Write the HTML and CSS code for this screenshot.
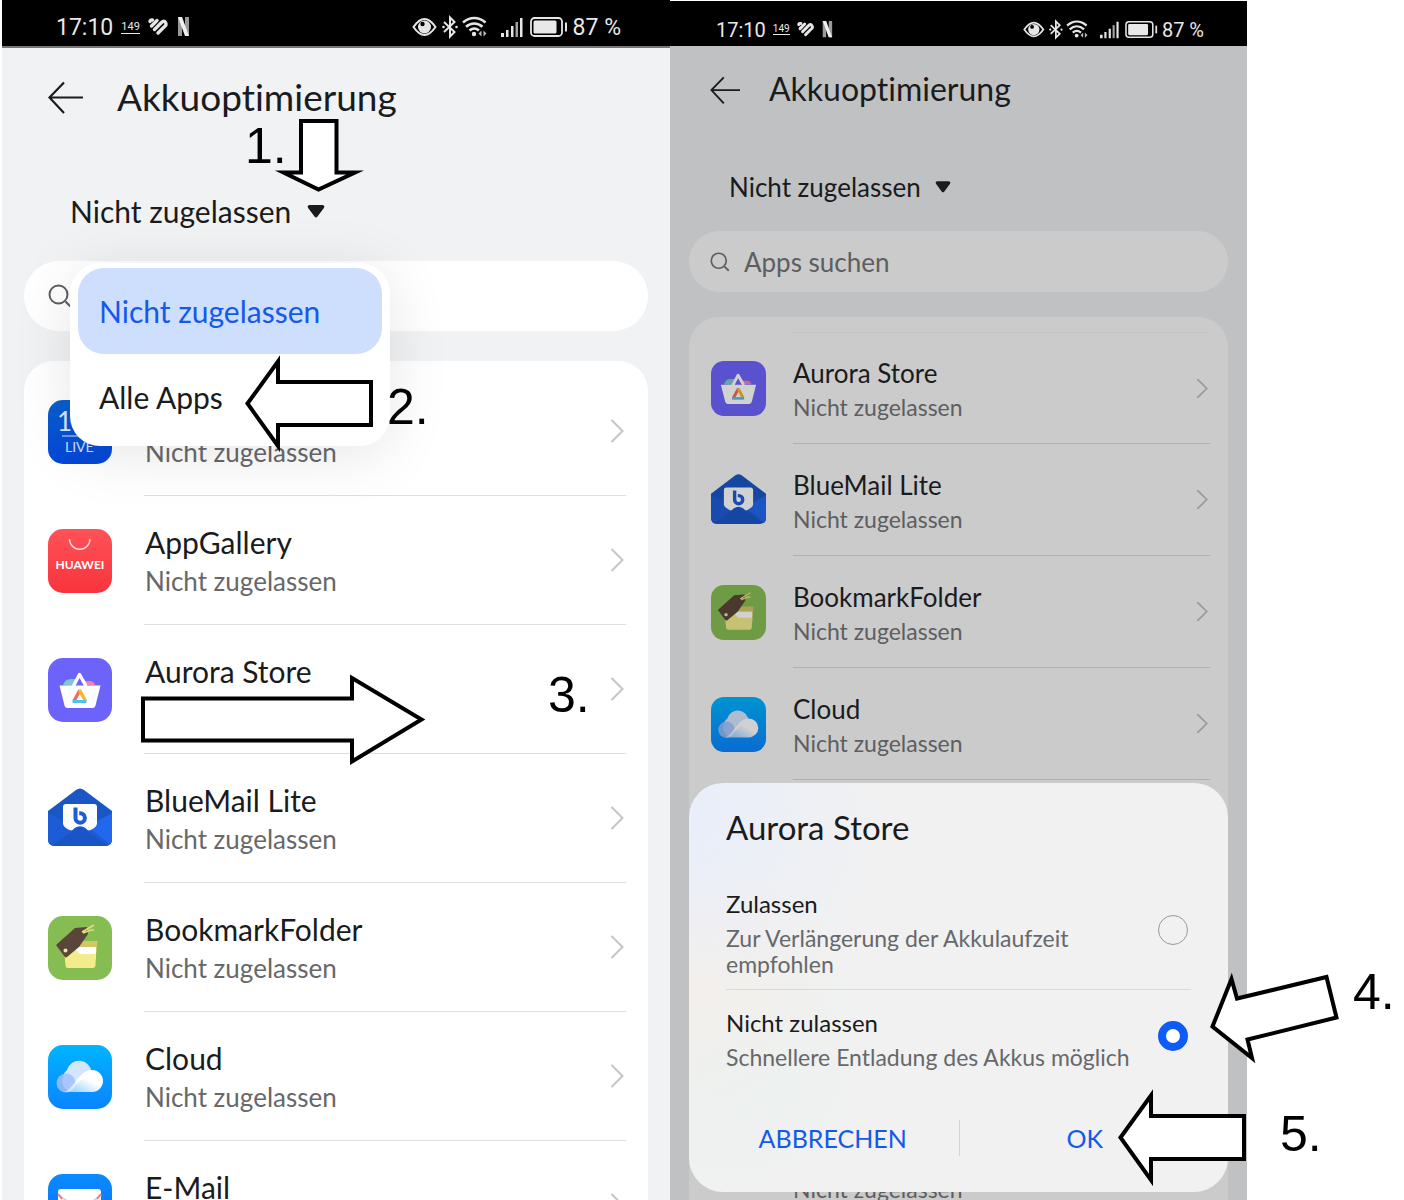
FILE: index.html
```html
<!DOCTYPE html>
<html lang="de">
<head>
<meta charset="utf-8">
<meta name="viewport" content="width=device-width, initial-scale=1">
<title>Akkuoptimierung</title>
<link rel="stylesheet" href="styles.css">
</head>
<body>
<svg class="defs" aria-hidden="true">
  <defs>
    <linearGradient id="g-live" x1="0" y1="0" x2="0" y2="1"><stop offset="0" stop-color="#0a5fd0"/><stop offset="1" stop-color="#0546d8"/></linearGradient>
    <linearGradient id="g-gallery" x1="0" y1="0" x2="0" y2="1"><stop offset="0" stop-color="#ff5257"/><stop offset="1" stop-color="#f8333c"/></linearGradient>
    <linearGradient id="g-cloud" x1="0" y1="0" x2="0" y2="1"><stop offset="0" stop-color="#00b4ff"/><stop offset="1" stop-color="#0a84ff"/></linearGradient>
    <linearGradient id="g-puff" x1="0" y1="1" x2="1" y2="0"><stop offset="0" stop-color="#fff" stop-opacity=".5"/><stop offset=".6" stop-color="#fff"/></linearGradient>
    <linearGradient id="g-mail" x1="0" y1="0" x2="0" y2="1"><stop offset="0" stop-color="#0a8bff"/><stop offset="1" stop-color="#0a6cff"/></linearGradient>
  </defs>
  <symbol id="status-left" viewBox="0 0 42 24">
    <g fill="none" stroke="#e6e6e6" stroke-width="3.4" stroke-linecap="round">
      <path d="M2 6.500q0-2 2.500-1.500"/><path d="M3.500 11l5.500-5.500"/><path d="M6.500 14.500l7-7q2.500-2.500 4 0t-1 4l-6.500 6.500"/>
    </g>
    <path d="M30 2h4v19h-4zM37 2h4v19h-4z" fill="#999"/><path d="M30 2h4l7 19h-4z" fill="#f0f0f0"/>
  </symbol>
  <symbol id="status-right" viewBox="0 0 156 24">
    <path d="M1.500 12C6 5.500 9 4 12.500 4S19 5.500 23.500 12C19 18.500 16 20 12.500 20S6 18.500 1.500 12z" fill="none" stroke="#e6e6e6" stroke-width="2"/>
    <circle cx="12.500" cy="12" r="6.500" fill="#e6e6e6"/><circle cx="10.500" cy="9" r="2.200" fill="#000"/>
    <g fill="none" stroke="#e6e6e6" stroke-width="2"><path d="M32 7l10.500 10L38 21.500v-19L42.500 7 32 17"/></g>
    <circle cx="31.500" cy="12" r="1.300" fill="#e6e6e6"/><circle cx="44.500" cy="12" r="1.300" fill="#e6e6e6"/>
    <g fill="none" stroke="#e6e6e6" stroke-width="2.600"><path d="M51 7.500c7-6 15.500-6 22.500 0"/><path d="M54 11.800c5-4.500 11.500-4.500 16.500 0"/><path d="M57.500 15.500c3-2.500 6.500-2.500 9.500 0"/></g>
    <circle cx="62" cy="19" r="2.200" fill="#e6e6e6"/><path d="M66.500 18.500l3-3v6zM74.500 18.500l-3-3v6z" fill="#bbb"/>
    <g fill="#e6e6e6"><path d="M89 18h3v4h-3zM94 15h2.500v7H94zM99 11h2.500v11H99zM108 3h2.500v19H108z"/><path d="M103.500 7h2.500v15h-2.500z" opacity=".7"/></g>
    <rect x="119" y="3" width="31" height="18" rx="3.500" fill="none" stroke="#e6e6e6" stroke-width="1.800"/>
    <rect x="121.500" y="5.500" width="23" height="13" rx="1.500" fill="#e8e8e8"/><path d="M153 7.500h2v9h-2z" fill="#e6e6e6"/>
  </symbol>
  <symbol id="back" viewBox="0 0 36 34"><path d="M35 16.500H2M16 1.500l-14.500 15L16 32" fill="none" stroke="currentColor" stroke-width="2.200"/></symbol>
  <symbol id="caret" viewBox="0 0 18 13"><path d="M2.500 0h13q3 .5 1 3.500l-6 8q-1.500 2-3 0l-6-8Q-.5.500 2.500 0z" fill="currentColor"/></symbol>
  <symbol id="search" viewBox="0 0 24 24"><circle cx="10.500" cy="10.500" r="9" fill="none" stroke="currentColor" stroke-width="2"/><path d="M17.500 17.500l5 5" stroke="currentColor" stroke-width="2.200"/></symbol>
  <symbol id="chevron" viewBox="0 0 14 24"><path d="M1.500 1l11 11-11 11" fill="none" stroke="currentColor" stroke-width="2"/></symbol>
  <symbol id="app-aurora" viewBox="0 0 64 64">
    <rect width="64" height="64" rx="15" fill="#6c63fb"/>
    <path d="M15 27q2-6 8-6h5l-3 7z" fill="#7fc8c9"/><path d="M36 27l-3-4h9q4 0 5 4z" fill="#ee82ad"/>
    <path d="M25.500 28l6-11.500L38 28" fill="none" stroke="#fff" stroke-width="3.400" stroke-linejoin="round"/>
    <path d="M11.500 27.500h41l-5 20q-.7 2.500-3 2.500h-25q-2.300 0-3-2.500z" fill="#fff"/>
    <path d="M32 32L26 43" stroke="#f26b5b" stroke-width="3.400"/><path d="M31.500 32L37.500 43" stroke="#fbb52b" stroke-width="3.400"/><path d="M24.500 43.500h14" stroke="#4fc0f2" stroke-width="3"/>
  </symbol>
  <symbol id="app-bluemail" viewBox="0 0 64 64">
    <g transform="translate(0 -2)">
      <path d="M0 26L28 5q4-3 8 0l28 21v28q0 7-7 7H7q-7 0-7-7z" fill="#1a56c4"/>
      <path d="M0 28l32 16 32-16v26q0 7-7 7H7q-7 0-7-7z" fill="#1c5cd6"/>
      <path d="M64 28L40 42l22 17q2-2 2-5z" fill="#2168ee"/><path d="M4 60l24-16q4-3 8 0l24 16q-2 1-4 1H8z" fill="#1a55c8"/>
      <path d="M18 19h28q3 0 3 3v17q-1 4-8 6.500-2-.5-3.500-2.500-5.500-3.500-11 0-1.500 2-3.500 2.500-7-2.500-8-6.500V22q0-3 3-3z" fill="#fff"/>
      <path d="M27.500 22.500V33a4.700 4.700 0 1 0 4.700-4.700h-1" fill="none" stroke="#1d5cd3" stroke-width="4"/>
    </g>
  </symbol>
  <symbol id="app-bookmark" viewBox="0 0 64 64">
    <rect width="64" height="64" rx="15" fill="#86bd53"/>
    <path d="M28 25h21.500l-1 12H26z" fill="#cfc964"/><path d="M24 31h24v12H24z" fill="#fff"/>
    <path d="M16 34h12l4 4h16l-.5 11q0 3-3 3H20q-2.500 0-2.500-3z" fill="#f3ec8c"/>
    <path d="M8 29L27 12l12-1 1 7-9 13-12 10q-1.500 1-2.500-.5z" fill="#594539"/>
    <circle cx="17.500" cy="34.500" r="2" fill="#f0e2a8"/><path d="M34 16l12-7M35 17l8-3 3 0" fill="none" stroke="#dfe27a" stroke-width="1.600"/>
  </symbol>
  <symbol id="app-cloud" viewBox="0 0 64 64">
    <rect width="64" height="64" rx="15" fill="url(#g-cloud)"/>
    <path d="M20 46a13 13 0 0 1-1-21 12.500 12.500 0 0 1 24.500 2z" fill="#d3e6fd"/><circle cx="18" cy="38" r="9.500" fill="#9fc0fa" opacity=".85"/>
    <path d="M16 47c10-2 14-22 28-22a11 11 0 0 1 0 22z" fill="url(#g-puff)"/>
  </symbol>
  <symbol id="app-mail" viewBox="0 0 64 64">
    <rect width="64" height="64" rx="15" fill="url(#g-mail)"/>
    <rect x="10" y="15" width="43" height="34" rx="3" fill="#fff"/><path d="M11 21l17 13q4 3 8 0l17-13" fill="none" stroke="#c8dcfa" stroke-width="2"/>
    <path d="M10 20l4 5M53 20l-4 5" stroke="#f07a70" stroke-width="2"/>
  </symbol>
</svg>

<main class="board">
  <section class="phone phone--large">
    <div class="status">
      <span class="status__time">17:10</span><span class="status__speed">149</span>
      <svg class="status__left"><use href="#status-left"/></svg>
      <svg class="status__right"><use href="#status-right"/></svg>
      <span class="status__battery">87 %</span>
    </div>
    <header class="bar">
      <button class="bar__back" type="button" aria-label="Zurück"><svg><use href="#back"/></svg></button>
      <h1 class="bar__title">Akkuoptimierung</h1>
    </header>
    <button class="filter" type="button">Nicht zugelassen<svg><use href="#caret"/></svg></button>
    <div class="finder">
      <div class="search"><svg><use href="#search"/></svg><input class="search__input" type="search" aria-label="Apps"></div>
      <div class="menu" role="menu">
        <button class="menu__item menu__item--on" role="menuitem" type="button">Nicht zugelassen</button>
        <button class="menu__item" role="menuitem" type="button">Alle Apps</button>
      </div>
    </div>
    <ul class="apps">
      <li class="app">
        <svg class="app__icon" viewBox="0 0 64 64">
          <rect width="64" height="64" rx="15" fill="url(#g-live)"/>
          <text x="9" y="31" font-size="26" fill="#dbe8ff">1</text><path d="M14 36h34" stroke="#8fb9f5" stroke-width="1.500"/>
          <text x="17" y="52" font-size="14" fill="#cfe0ff">LIVE</text>
        </svg>
        <a class="app__link" href="#"><span class="app__text"><span class="app__name">&nbsp;</span><span class="app__state">Nicht zugelassen</span></span><svg class="app__go"><use href="#chevron"/></svg></a>
      </li>
      <li class="app">
        <svg class="app__icon" viewBox="0 0 64 64">
          <rect width="64" height="64" rx="15" fill="url(#g-gallery)"/>
          <path d="M21.500 10a10.200 10.200 0 0 0 20.500 0" fill="none" stroke="#ffd9da" stroke-width="1.500"/>
          <text x="32" y="40" font-size="12" font-weight="700" text-anchor="middle" fill="#fff">HUAWEI</text>
        </svg>
        <a class="app__link" href="#"><span class="app__text"><span class="app__name">AppGallery</span><span class="app__state">Nicht zugelassen</span></span><svg class="app__go"><use href="#chevron"/></svg></a>
      </li>
      <li class="app"><svg class="app__icon"><use href="#app-aurora"/></svg><a class="app__link" href="#"><span class="app__text"><span class="app__name">Aurora Store</span><span class="app__state">&nbsp;</span></span><svg class="app__go"><use href="#chevron"/></svg></a></li>
      <li class="app"><svg class="app__icon"><use href="#app-bluemail"/></svg><a class="app__link" href="#"><span class="app__text"><span class="app__name">BlueMail Lite</span><span class="app__state">Nicht zugelassen</span></span><svg class="app__go"><use href="#chevron"/></svg></a></li>
      <li class="app"><svg class="app__icon"><use href="#app-bookmark"/></svg><a class="app__link" href="#"><span class="app__text"><span class="app__name">BookmarkFolder</span><span class="app__state">Nicht zugelassen</span></span><svg class="app__go"><use href="#chevron"/></svg></a></li>
      <li class="app"><svg class="app__icon"><use href="#app-cloud"/></svg><a class="app__link" href="#"><span class="app__text"><span class="app__name">Cloud</span><span class="app__state">Nicht zugelassen</span></span><svg class="app__go"><use href="#chevron"/></svg></a></li>
      <li class="app"><svg class="app__icon"><use href="#app-mail"/></svg><a class="app__link" href="#"><span class="app__text"><span class="app__name">E-Mail</span><span class="app__state">&nbsp;</span></span><svg class="app__go"><use href="#chevron"/></svg></a></li>
    </ul>
  </section>

  <section class="phone phone--small">
    <div class="status">
      <span class="status__time">17:10</span><span class="status__speed">149</span>
      <svg class="status__left"><use href="#status-left"/></svg>
      <svg class="status__right"><use href="#status-right"/></svg>
      <span class="status__battery">87 %</span>
    </div>
    <header class="bar">
      <button class="bar__back" type="button" aria-label="Zurück"><svg><use href="#back"/></svg></button>
      <h2 class="bar__title">Akkuoptimierung</h2>
    </header>
    <button class="filter" type="button">Nicht zugelassen<svg><use href="#caret"/></svg></button>
    <div class="finder">
      <div class="search"><svg><use href="#search"/></svg><input class="search__input" type="search" placeholder="Apps suchen" aria-label="Apps suchen"></div>
    </div>
    <ul class="apps">
      <li class="app"><svg class="app__icon"><use href="#app-aurora"/></svg><a class="app__link" href="#"><span class="app__text"><span class="app__name">Aurora Store</span><span class="app__state">Nicht zugelassen</span></span><svg class="app__go"><use href="#chevron"/></svg></a></li>
      <li class="app"><svg class="app__icon"><use href="#app-bluemail"/></svg><a class="app__link" href="#"><span class="app__text"><span class="app__name">BlueMail Lite</span><span class="app__state">Nicht zugelassen</span></span><svg class="app__go"><use href="#chevron"/></svg></a></li>
      <li class="app"><svg class="app__icon"><use href="#app-bookmark"/></svg><a class="app__link" href="#"><span class="app__text"><span class="app__name">BookmarkFolder</span><span class="app__state">Nicht zugelassen</span></span><svg class="app__go"><use href="#chevron"/></svg></a></li>
      <li class="app"><svg class="app__icon"><use href="#app-cloud"/></svg><a class="app__link" href="#"><span class="app__text"><span class="app__name">Cloud</span><span class="app__state">Nicht zugelassen</span></span><svg class="app__go"><use href="#chevron"/></svg></a></li>
      <li class="app app--below"><span class="app__icon"></span><a class="app__link" href="#"><span class="app__text"><span class="app__name">&nbsp;</span><span class="app__state">Nicht zugelassen</span></span></a></li>
    </ul>
    <form class="dialog" role="dialog" aria-labelledby="dialog-title">
      <h3 class="dialog__title" id="dialog-title">Aurora Store</h3>
      <label class="option"><span class="option__text"><span class="option__name">Zulassen</span><span class="option__note">Zur Verlängerung der Akkulaufzeit empfohlen</span></span><input class="option__radio" type="radio" name="mode"></label>
      <label class="option"><span class="option__text"><span class="option__name">Nicht zulassen</span><span class="option__note">Schnellere Entladung des Akkus möglich</span></span><input class="option__radio" type="radio" name="mode" checked></label>
      <div class="dialog__actions"><button type="button">ABBRECHEN</button><button type="button">OK</button></div>
    </form>
  </section>
</main>

<div class="notes">
  <svg class="arrow arrow--1" viewBox="270 115 96 80"><path d="M301 121h35.500v51.500h18.500l-36.500 17-35-17H301z"/></svg>
  <span class="step step--1">1.</span>
  <svg class="arrow arrow--2" viewBox="240 350 140 106"><path d="M247.500 403.500l30.500-42V382h93v43h-93v21z"/></svg>
  <span class="step step--2">2.</span>
  <svg class="arrow arrow--3" viewBox="136 670 294 100"><path d="M143 698.500h209V678l69.500 41.500-69.500 42v-21H143z"/></svg>
  <span class="step step--3">3.</span>
  <svg class="arrow arrow--4" viewBox="1204 968 140 102"><path d="M1212.500 1026.500l19-47.500 5.500 19.500 89.500-21.500 10 40.500-89 22 4.500 18.500z"/></svg>
  <span class="step step--4">4.</span>
  <svg class="arrow arrow--2 arrow--5" viewBox="240 350 140 106"><path d="M247.500 403.500l30.500-42V382h93v43h-93v21z"/></svg>
  <span class="step step--5">5.</span>
</div>
</body>
</html>
```
FILE: styles.css
```css
* { box-sizing: border-box; }
body { margin: 0; background: #fff; color: #1a1b1d; font-family: Lato, "Open Sans", sans-serif; font-weight: 400; font-variant-ligatures: none; overflow: hidden; }
h1, h2, h3, ul { margin: 0; padding: 0; font-weight: 400; list-style: none; }
button, input { font: inherit; color: inherit; border: 0; padding: 0; background: none; font-variant-ligatures: none; }
svg { display: block; flex: none; }
.defs { position: absolute; width: 0; height: 0; }

.board { display: grid; grid-template-columns: 668fr 577fr 157fr; height: 100vh; padding-left: 2px; }
.phone { position: relative; overflow: hidden; min-width: 0; }
.phone--large {
  --title: 37px; --filter: 30px; --name: 30px; --state: 26px; --icon: 64px; --gutter: 22px;
  background: #f1f2f4;
}
.phone--small {
  --title: 32px; --filter: 26px; --name: 26px; --state: 23px; --icon: 55px; --gutter: 19px;
  margin-top: 1px; background: #c0c1c3;
}

.status { display: flex; align-items: center; background: #000; color: #e8e8e8; font-family: Roboto, sans-serif; }
.phone--large .status { height: 48px; padding: 8px 49px 0 54px; border-bottom: 2px solid #777; font-size: 23px; }
.phone--small .status { height: 45px; padding: 12px 43px 0 46px; font-size: 20px; }
.status__speed { border-bottom: 1px solid; margin: 0 8px; font-size: 11px; line-height: 12px; }
.status__left { width: 42px; height: 24px; }
.status__right { width: 156px; height: 24px; margin: 0 5px 0 auto; }
.phone--small .status__left { width: 36px; height: 21px; }
.phone--small .status__right { width: 135px; height: 21px; margin-right: 4px; }
.phone--small .status__speed { margin: 0 7px; font-size: 10px; line-height: 10px; }

.bar { display: flex; align-items: center; }
.bar__title { padding-bottom: 2px; font-size: var(--title); line-height: 44px; }
.phone--large .bar { height: 100px; padding-left: 46px; gap: 33px; }
.phone--small .bar { height: 88px; padding-left: 40px; gap: 28px; }
.phone--large .bar__back svg { width: 36px; height: 34px; }
.phone--small .bar__back svg { width: 31px; height: 29px; }

.filter { display: flex; align-items: center; padding-bottom: 2px; font-size: var(--filter); }
.phone--large .filter { height: 50px; margin: 39px 0 24px 68px; gap: 16px; }
.phone--small .filter { height: 42px; margin: 33px 0 22px 59px; gap: 14px; }
.phone--large .filter svg { width: 18px; height: 13px; }
.phone--small .filter svg { width: 16px; height: 12px; }

.finder { position: relative; margin: 0 var(--gutter); }
.search { display: flex; align-items: center; border-radius: 35px; color: #5d5e60; }
.search__input { flex: 1; min-width: 0; outline: 0; font-size: var(--filter); appearance: none; }
.search__input::placeholder { color: #5d5e60; opacity: 1; }
.phone--large .search { height: 70px; padding: 0 24px; background: #fff; }
.phone--large .search svg { width: 24px; height: 24px; }
.phone--small .search { height: 61px; padding: 0 21px; gap: 14px; background: #cbcbcb; }
.phone--small .search svg { width: 20px; height: 20px; }

.menu { position: absolute; z-index: 1; top: 2px; left: 46px; width: 320px; padding: 5px 8px 6px; border-radius: 30px; background: #fff; box-shadow: 0 8px 60px rgba(0, 0, 0, .1); }
.menu__item { display: block; width: 100%; height: 86px; padding: 0 21px; border-radius: 26px; font-size: 30px; text-align: left; }
.menu__item--on { background: #cedefd; color: #1459e8; }

.apps { margin: 0 var(--gutter); padding-top: 6px; border-radius: 30px 30px 0 0; background: #fff; }
.phone--large .apps { margin-top: 30px; }
.app { display: flex; align-items: center; gap: 32px; height: 129px; padding: 0 22px 0 24px; }
.app__icon { width: var(--icon); height: var(--icon); flex: none; }
.app__link { flex: 1; display: flex; align-items: center; justify-content: space-between; height: 100%; padding-right: 2px; border-bottom: 1px solid #dfdfe0; color: inherit; text-decoration: none; }
.app__text { display: grid; padding: 4px 0 0 1px; }
.app__name { font-size: var(--name); line-height: 39px; }
.app__state { font-size: var(--state); line-height: 39px; color: #67686a; }
.app__go { width: 14px; height: 24px; color: #c4c5c6; }

.phone--small .apps { margin-top: 25px; padding-top: 15px; background: #cbcbcb; }
.phone--small .app { gap: 27px; height: 112px; padding: 0 18px 0 22px; }
.phone--small .app__link { border-color: #b0b0b1; }
.phone--small .app:first-child .app__link { border-top: 1px solid #c5c5c6; }
.phone--small .app__text { padding-left: 0; }
.phone--small .app__name, .phone--small .app__state { line-height: 34px; }
.phone--small .app__state { color: #5d5e60; }
.phone--small .app__icon { filter: brightness(.82); }
.phone--small .app__go { width: 12px; height: 21px; color: #999a9b; }
.phone--small .app--below { margin-top: 334px; }

.dialog { position: absolute; left: var(--gutter); right: var(--gutter); bottom: 8px; padding: 0 37px; border-radius: 34px; background: radial-gradient(circle at 0 8%, #e8eefa, transparent 30%), radial-gradient(circle at 0 44%, #f5efea, transparent 26%), radial-gradient(circle at 8% 68%, #ebf1ef, transparent 26%), #f1f1f1; }
.dialog__title { padding: 22px 0; font-size: 33px; line-height: 44px; }
.option { display: flex; align-items: center; justify-content: space-between; padding: 12px 3px 12px 0; }
.option + .option { border-top: 1px solid #d9d9d9; }
.option__text { display: grid; width: 405px; }
.option__name { font-size: 24px; line-height: 42px; }
.option__note { font-size: 23px; line-height: 26px; color: #67686a; }
.option__radio { appearance: none; width: 30px; height: 30px; margin: 0; border: 1px solid #999; border-radius: 50%; }
.option__radio:checked { border: 8px solid #0f5bf5; background: #fff; }
.dialog__actions { display: grid; grid-template-columns: 1fr 1fr; margin: 38px -19px 36px; color: #1459e8; font-size: 25px; }
.dialog__actions button { height: 36px; }
.dialog__actions button + button { border-left: 1px solid #d4d4d4; }

.notes { position: absolute; inset: 0; z-index: 2; overflow: hidden; pointer-events: none; }
.arrow { position: absolute; fill: #fff; stroke: #000; stroke-width: 4; stroke-miterlimit: 10; }
.arrow--1 { left: 270px; top: 115px; width: 96px; height: 80px; }
.arrow--2 { left: 240px; top: 350px; width: 140px; height: 106px; }
.arrow--3 { left: 136px; top: 670px; width: 294px; height: 100px; }
.arrow--4 { left: 1204px; top: 968px; width: 140px; height: 102px; }
.arrow--5 { left: 1113px; top: 1084px; }
.step { position: absolute; color: #000; font: 50px/50px "Liberation Sans", Arial, sans-serif; }
.step--1 { left: 245px; top: 121px; }
.step--2 { left: 387px; top: 382px; }
.step--3 { left: 548px; top: 670px; }
.step--4 { left: 1353px; top: 967px; }
.step--5 { left: 1280px; top: 1109px; }
```
